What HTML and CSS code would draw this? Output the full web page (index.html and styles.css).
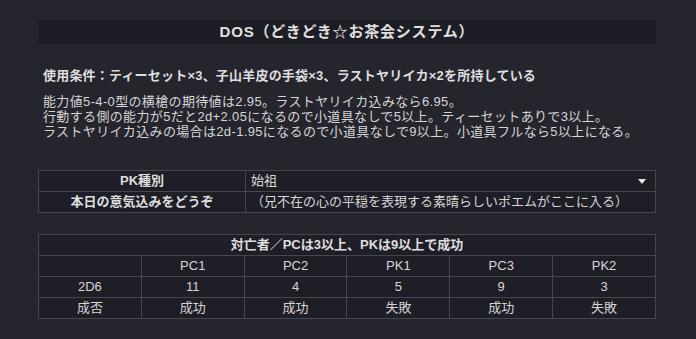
FILE: index.html
```html
<!DOCTYPE html>
<html lang="ja">
<head>
<meta charset="utf-8">
<link rel="stylesheet" href="styles.css">
</head>
<body>
<div class="page">
  <h1 class="title">DOS（どきどき☆お茶会システム）</h1>
  <p class="cond">使用条件：ティーセット×3、子山羊皮の手袋×3、ラストヤリイカ×2を所持している</p>
  <p class="desc">能力値5-4-0型の横槍の期待値は2.95。ラストヤリイカ込みなら6.95。<br>行動する側の能力が5だと2d+2.05になるので小道具なしで5以上。ティーセットありで3以上。<br>ラストヤリイカ込みの場合は2d-1.95になるので小道具なしで9以上。小道具フルなら5以上になる。</p>
  <table class="info">
    <tr>
      <th>PK種別</th>
      <td><div class="select"><span>始祖</span><svg width="8" height="5" viewBox="0 0 8 5"><path d="M0 0H8L4 5Z" fill="#e6e6e6"/></svg></div></td>
    </tr>
    <tr>
      <th>本日の意気込みをどうぞ</th>
      <td>（兄不在の心の平穏を表現する素晴らしいポエムがここに入る）</td>
    </tr>
  </table>
  <table class="result">
    <tr><th colspan="6">対亡者／PCは3以上、PKは9以上で成功</th></tr>
    <tr><td></td><td>PC1</td><td>PC2</td><td>PK1</td><td>PC3</td><td>PK2</td></tr>
    <tr><td>2D6</td><td>11</td><td>4</td><td>5</td><td>9</td><td>3</td></tr>
    <tr><td>成否</td><td>成功</td><td>成功</td><td>失敗</td><td>成功</td><td>失敗</td></tr>
  </table>
</div>
</body>
</html>
```
FILE: styles.css
```css
html, body {
  margin: 0;
  padding: 0;
  background: #25252e;
}
body {
  font-family: "Liberation Sans", "Noto Sans CJK JP", sans-serif;
  color: #d6d6d6;
  font-size: 13px;
  text-spacing-trim: space-all;
}
.page {
  width: 618px;
  padding: 20px 0 0 38px;
}
.title {
  margin: 0;
  height: 24px;
  line-height: 24px;
  background: #1d1d26;
  text-align: center;
  font-size: 15px;
  font-weight: bold;
  color: #e0e0e0;
  letter-spacing: 0.8px;
}
.cond {
  margin: 24px 0 0 5px;
  line-height: 15px;
  font-weight: bold;
  color: #dedede;
  letter-spacing: 0.2px;
}
.desc {
  margin: 11px 0 0 5px;
  line-height: 15px;
  letter-spacing: 0.35px;
}
table {
  width: 618px;
  border-collapse: collapse;
  table-layout: fixed;
  background: #1e1e27;
}
th, td {
  border: 1px solid #464650;
  height: 20px;
  padding: 0 4px;
  line-height: 18px;
  font-size: 13px;
}
th {
  font-weight: bold;
  color: #dedede;
}
.info {
  margin-top: 31px;
}
.info th {
  width: 198px;
  text-align: center;
}
.info td {
  text-align: left;
  padding-left: 5px;
  padding-right: 9px;
}
.select {
  display: flex;
  justify-content: space-between;
  align-items: center;
}
.result {
  margin-top: 21px;
}
.result td {
  text-align: center;
}
```
